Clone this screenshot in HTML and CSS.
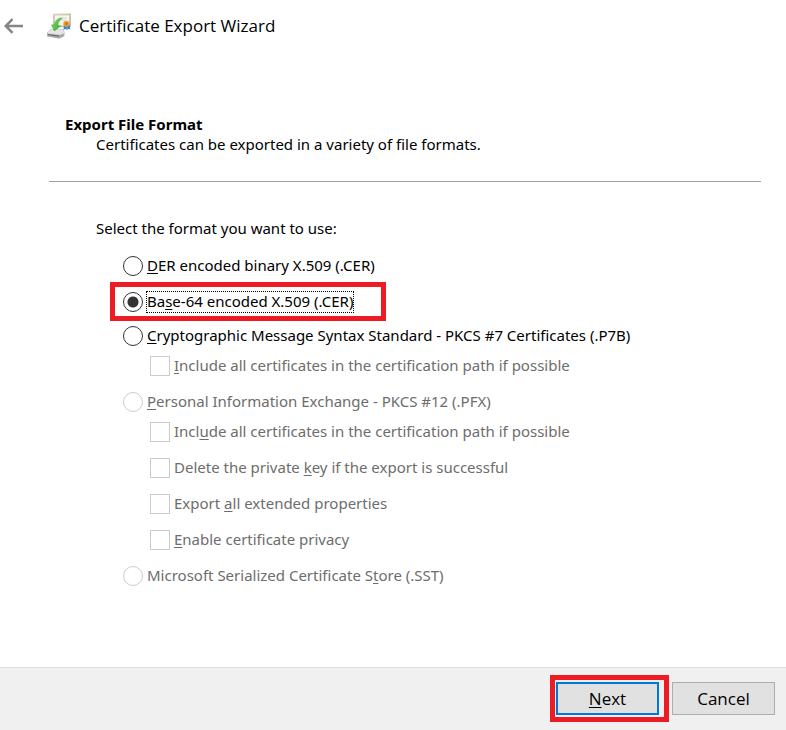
FILE: index.html
```html
<!DOCTYPE html>
<html lang="en">
<head>
<meta charset="utf-8">
<meta name="viewport" content="width=device-width, initial-scale=1">
<title>Certificate Export Wizard</title>
<link rel="stylesheet" href="styles.css">
</head>
<body>
<form class="wizard">
  <header class="titlebar">
    <button class="back" type="button" aria-label="Back">
      <svg width="20" height="16" viewBox="0 0 20 16" fill="none" stroke="#858585" stroke-width="2.5"><path d="M1.5 8H19M8.5 1.2L1.7 8l6.8 6.8"/></svg>
    </button>
    <svg class="logo" width="26" height="26" viewBox="0 0 26 26" aria-hidden="true">
      <defs>
        <linearGradient id="frame" x2="1" y2="1"><stop stop-color="#ded2ba"/><stop offset="1" stop-color="#b8ae9c"/></linearGradient>
        <linearGradient id="arrow" x2="1" y2="1"><stop stop-color="#8be36a"/><stop offset="1" stop-color="#27a52b"/></linearGradient>
        <linearGradient id="drive" x2="0" y2="1"><stop stop-color="#f1f1f1"/><stop offset="1" stop-color="#a7a7a7"/></linearGradient>
      </defs>
      <path d="M6 .8L24 .4l-.3 13.8L6 14z" fill="url(#frame)"/>
      <path d="M8 2.5l14.3-.2-.3 10.4-14-.1z" fill="#f7f5ef"/>
      <path d="M12 5h8M13 7h6" stroke="#d5d1ca" stroke-width=".8"/>
      <path d="M17 11.5l-.5 5.5 2-1.2 1.2 1.4.3-5zM20 12l.3 5 1.5-1.3 1.5 1-1-5.2z" fill="#3481cf"/>
      <circle cx="19.3" cy="10.7" r="3" fill="#eda12b"/>
      <circle cx="19.3" cy="10.7" r="1.3" fill="#c96d12"/>
      <path d="M0 20l4-3.3 12.2.2 1 2.8-.3 3.3-4.8 2.2L.2 23z" fill="url(#drive)" stroke="#929292" stroke-width=".6"/>
      <path d="M0 20l4-3.3 12.2.2 1 2.8-4.5 1.8z" fill="#e6e6e6"/>
      <path d="M1 21l11.5 1.5v1.3L1 22.3z" fill="#666"/>
      <path d="M14 22.2l2.1-.8v1.2l-2.1.9z" fill="#54b84a"/>
      <path d="M15.3 5.3C10.6 5 8 7.5 7.7 12l-3.2-.2L7.4 18l6.2-5-2.7-.5c0-3 1.3-5.4 4.4-7.2z" fill="url(#arrow)" stroke="#35ab32" stroke-width=".5"/>
    </svg>
    <h1>Certificate Export Wizard</h1>
  </header>

  <main>
    <section class="intro">
      <h2>Export File Format</h2>
      <p>Certificates can be exported in a variety of file formats.</p>
    </section>
    <fieldset>
      <legend>Select the format you want to use:</legend>
      <div class="option"><input type="radio" name="format" id="der"><label for="der"><u>D</u>ER encoded binary X.509 (.CER)</label></div>
      <div class="option highlight"><input type="radio" name="format" id="base64" checked><label for="base64">Ba<u>s</u>e-64 encoded X.509 (.CER)</label></div>
      <div class="option"><input type="radio" name="format" id="p7b"><label for="p7b"><u>C</u>ryptographic Message Syntax Standard - PKCS #7 Certificates (.P7B)</label></div>
      <div class="suboptions">
        <div class="option"><input type="checkbox" id="p7b-path" disabled><label for="p7b-path"><u>I</u>nclude all certificates in the certification path if possible</label></div>
      </div>
      <div class="option spaced"><input type="radio" name="format" id="pfx" disabled><label for="pfx"><u>P</u>ersonal Information Exchange - PKCS #12 (.PFX)</label></div>
      <div class="suboptions">
        <div class="option"><input type="checkbox" id="pfx-path" disabled><label for="pfx-path">Incl<u>u</u>de all certificates in the certification path if possible</label></div>
        <div class="option"><input type="checkbox" id="delete-key" disabled><label for="delete-key">Delete the private <u>k</u>ey if the export is successful</label></div>
        <div class="option"><input type="checkbox" id="extended" disabled><label for="extended">Export <u>a</u>ll extended properties</label></div>
        <div class="option"><input type="checkbox" id="privacy" disabled><label for="privacy"><u>E</u>nable certificate privacy</label></div>
      </div>
      <div class="option spaced"><input type="radio" name="format" id="sst" disabled><label for="sst">Microsoft Serialized Certificate S<u>t</u>ore (.SST)</label></div>
    </fieldset>
  </main>

  <footer>
    <div class="callout"><button class="action primary" type="button"><span><u>N</u>ext</span></button></div>
    <button class="action" type="button">Cancel</button>
  </footer>
</form>
</body>
</html>
```
FILE: styles.css
```css
* { box-sizing: border-box; }

body {
  margin: 0;
  background: #fff;
  color: #000;
  font: 15px/20px "Noto Sans", "Open Sans", sans-serif;
}

h1, h2, p { margin: 0; }

u { text-underline-offset: 2px; text-decoration-thickness: 1px; text-decoration-skip-ink: none; }

.wizard {
  display: flex;
  flex-direction: column;
  min-height: 100vh;
}

.titlebar {
  display: flex;
  align-items: center;
  padding: 12px 4px 0;
}

.back {
  display: flex;
  margin-right: 23px;
  padding: 0;
  border: 0;
  background: none;
}

.logo { flex: none; margin-right: 6px; }

h1 { font: 17px/28px "Open Sans", sans-serif; }

main { flex: 1; padding: 74px 25px 24px 49px; }

.intro {
  padding: 0 16px 27px;
  border-bottom: 1px solid #a0a0a0;
}

h2 { font-size: 15px; line-height: 20px; font-weight: 700; }

.intro p { padding-left: 31px; }

fieldset {
  min-width: 0;
  margin: 36px 0 0;
  padding: 13px 0 0 74px;
  border: 0;
}

legend { margin-left: -27px; padding: 0; }

.option {
  display: flex;
  align-items: center;
  gap: 4px;
  min-height: 30px;
}

.option label {
  padding-bottom: 2px;
  line-height: 18px;
}

.option input {
  flex: none;
  appearance: none;
  width: 20px;
  height: 20px;
  margin: 0;
  border: 1px solid #333;
  background: #fff;
}

.option input[type="radio"] { border-radius: 50%; }

.option input:checked {
  background: radial-gradient(circle, #333 5px, #fff 6px);
}

.option input:disabled { border-color: #ccc; }
.option input:disabled + label { color: #6d6d6d; }

.highlight {
  width: fit-content;
  min-height: 39px;
  margin: 1px 0 0 -13px;
  padding: 0 28px 0 8px;
  border: 5px solid #ed1c24;
}

.highlight label { outline: 1px dotted #000; }

.suboptions {
  display: grid;
  gap: 6px;
  padding-left: 27px;
}

.spaced { margin-top: 6px; }

footer {
  display: flex;
  align-items: center;
  justify-content: flex-end;
  gap: 3px;
  padding: 7px 11px 8px;
  border-top: 1px solid #dfdfdf;
  background: #f0f0f0;
}

.callout {
  padding: 2px 5px 2px 1px;
  border: 5px solid #ed1c24;
}

.action {
  display: block;
  width: 103px;
  height: 33px;
  padding: 0;
  border: 1px solid #adadad;
  background: #e1e1e1;
  color: #000;
  font: 17px/24px "Open Sans", sans-serif;
}

.primary { border: 2px solid #0078d7; }
```
